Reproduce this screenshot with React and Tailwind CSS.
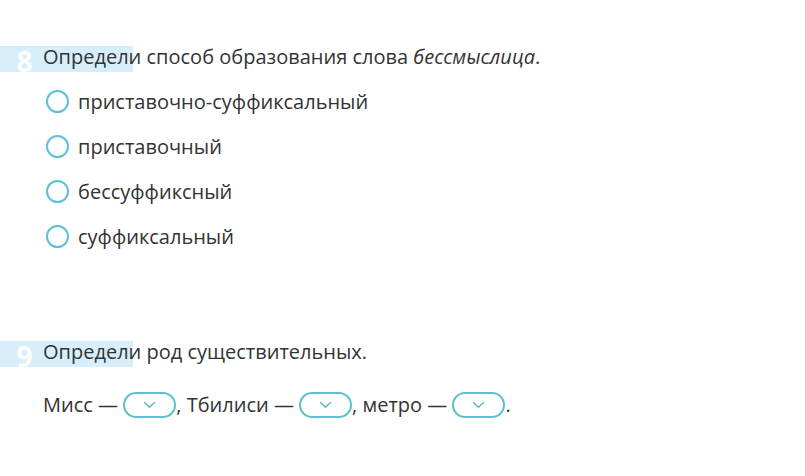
import React from "react";

function Header({ n, children }) {
  return (
    <div className="relative flex items-start h-[26px]">
      <div className="absolute left-0 top-[3px] h-[26px] w-[133px] bg-[#d7eefb]" />
      <div className="relative w-[43px] flex justify-center pl-[6px] text-[28px] font-bold text-white leading-[28px] pt-[4px]">
        {n}
      </div>
      <div className="relative text-[20px] leading-[28px] text-[#333]">{children}</div>
    </div>
  );
}

function Radio({ label }) {
  return (
    <label className="flex items-center h-[45px] gap-[9px]">
      <span className="ml-[46px] w-[23px] h-[23px] rounded-full border-2 border-[#5bc0d8] bg-white" />
      <span className="text-[20px] text-[#333]">{label}</span>
    </label>
  );
}

function Select() {
  return (
    <span className="inline-flex items-center justify-center w-[53px] h-[26px] rounded-full border-2 border-[#5bc0d0] align-middle -mt-[3px]">
      <svg width="13" height="8" viewBox="0 0 13 8" fill="none">
        <path d="M1.5 1.5 L6.5 6.2 L11.5 1.5" stroke="#5bb8cc" strokeWidth="1.5" strokeLinecap="round" strokeLinejoin="round" />
      </svg>
    </span>
  );
}

export default function App() {
  return (
    <div className="w-[805px] h-[476px] bg-white overflow-hidden" style={{ fontFamily: '"Open Sans", sans-serif' }}>
      <div className="pt-[43px]">
        <Header n="8">
          Определи способ образования слова <i>бессмыслица</i>.
        </Header>
        <div className="mt-[10px]">
          <Radio label="приставочно-суффиксальный" />
          <Radio label="приставочный" />
          <Radio label="бессуффиксный" />
          <Radio label="суффиксальный" />
        </div>
      </div>
      <div className="mt-[79px]">
        <Header n="9">Определи род существительных.</Header>
        <div className="mt-[26px] pl-[43px] text-[20px] leading-[30px] text-[#333] whitespace-pre">
          Мисс — <Select />, Тбилиси — <Select />, метро — <Select />.
        </div>
      </div>
    </div>
  );
}
